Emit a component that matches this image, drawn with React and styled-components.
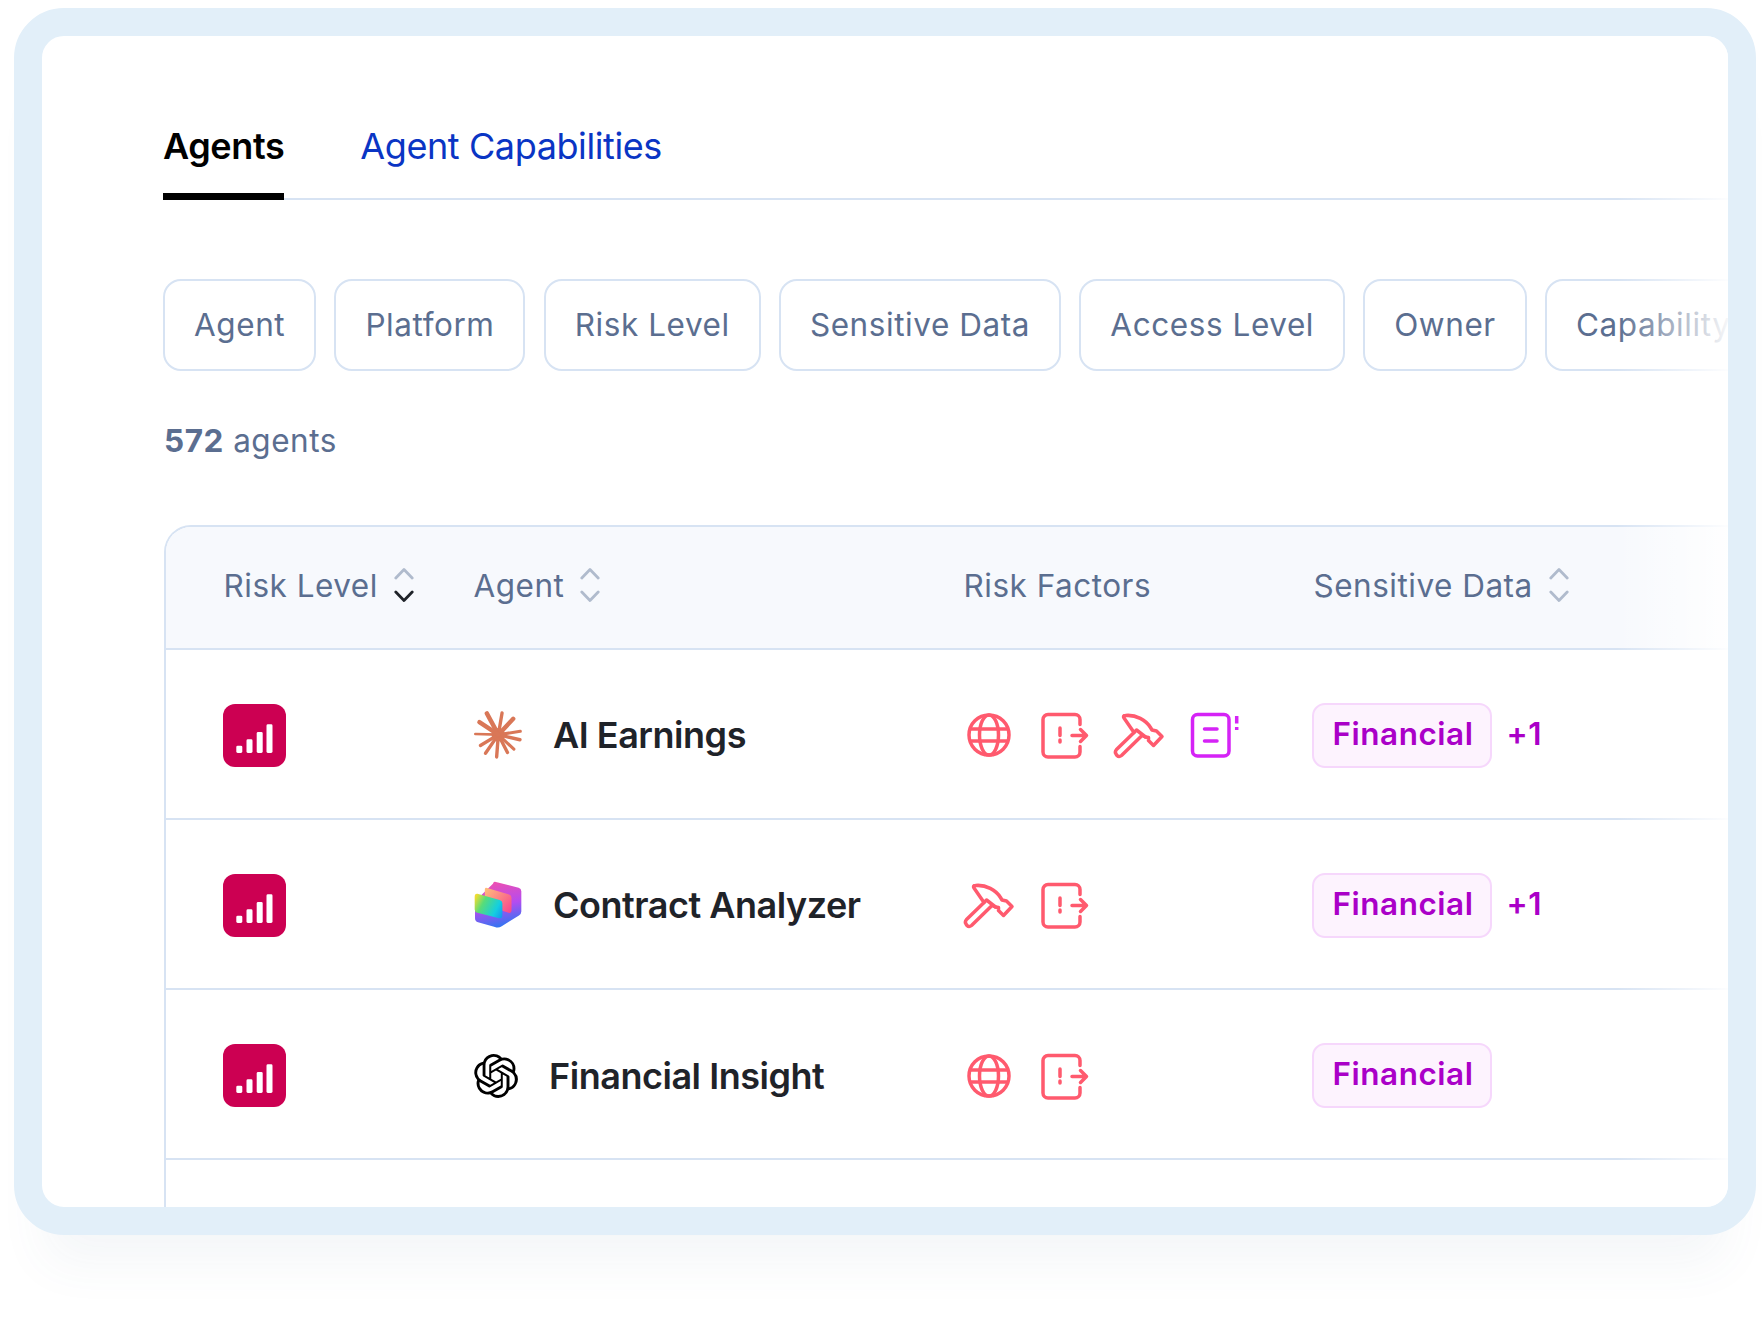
import React from "react";
import styled, { createGlobalStyle } from "styled-components";
import { SiOpenai } from "react-icons/si";

const GlobalStyle = createGlobalStyle`
  html, body { margin: 0; padding: 0; background: #ffffff; }
  body { font-family: Inter, "Liberation Sans", sans-serif; -webkit-font-smoothing: antialiased; }
`;

const Page = styled.div`
  width: 1764px;
  height: 1320px;
  box-sizing: border-box;
  padding: 8px 0 0 14px;
  overflow: hidden;
  background: #fff;
`;

const Frame = styled.div`
  width: 1742px;
  height: 1227px;
  box-sizing: border-box;
  border: 28px solid #e2eff9;
  border-radius: 50px;
  background: #fff;
  box-shadow: 0 58px 50px -30px rgba(70, 100, 140, 0.06);
`;

const Panel = styled.div`
  position: relative;
  height: 100%;
  box-sizing: border-box;
  padding: 83px 0 0 121px;
  display: flex;
  flex-direction: column;
  border-radius: 22px;
  overflow: hidden;
`;

const Fade = styled.div`
  position: absolute;
  top: 0;
  right: 0;
  bottom: 0;
  width: 112px;
  pointer-events: none;
  background: linear-gradient(to right, rgba(255, 255, 255, 0), rgba(255, 255, 255, 0.55) 60%, rgba(255, 255, 255, 0.95) 100%);
`;

const TabBar = styled.div`
  display: flex;
  gap: 76px;
  border-bottom: 2.5px solid #d7e3f3;
`;

const Tab = styled.div`
  height: 54px;
  line-height: 54px;
  padding-bottom: 20px;
  margin-bottom: -2.5px;
  font-size: 36px;
  letter-spacing: -0.4px;
  font-weight: ${(p) => (p.$active ? 600 : 400)};
  color: ${(p) => (p.$active ? "#000" : "#0a35c4")};
  border-bottom: 7px solid ${(p) => (p.$active ? "#000" : "transparent")};
`;

const FilterRow = styled.div`
  display: flex;
  gap: 18.2px;
  margin-top: 79px;
`;

const Filter = styled.div`
  flex-shrink: 0;
  height: 92px;
  box-sizing: border-box;
  display: flex;
  align-items: center;
  padding: 0 29px;
  border: 2.5px solid #d7e3f3;
  border-radius: 18px;
  font-size: 31.5px;
  letter-spacing: 0.57px;
  color: #5b6e90;
  white-space: nowrap;
`;

const Count = styled.div`
  margin-top: 46px;
  height: 47px;
  line-height: 47px;
  font-size: 31.5px;
  letter-spacing: 0.5px;
  margin-left: 1px;
  color: #5b6e90;
  b { font-weight: 700; }
`;

const Table = styled.div`
  flex: 1;
  margin: 61px -40px 0 0.5px;
  border-top: 2.5px solid #d7e3f3;
  border-left: 2.5px solid #d7e3f3;
  border-top-left-radius: 27px;
`;

const Row = styled.div`
  display: grid;
  grid-template-columns: 250px 490px 350px 1fr;
  align-items: center;
  box-sizing: border-box;
  padding-left: 58px;
  padding-top: ${(p) => (p.$head ? "0" : "3px")};
  padding-bottom: ${(p) => (p.$head ? "4px" : "0")};
  height: ${(p) => (p.$head ? "123px" : "170.25px")};
  border-bottom: 2.5px solid #d7e3f3;
  background: ${(p) => (p.$head ? "#f7f9fd" : "#fff")};
  border-top-left-radius: ${(p) => (p.$head ? "25px" : "0")};
`;

const HeadCell = styled.div`
  display: flex;
  align-items: center;
  gap: 16px;
  font-size: 31.5px;
  letter-spacing: 0.5px;
  color: #5b6e90;
  white-space: nowrap;
`;

const RiskTile = styled.div`
  width: 63px;
  height: 63px;
  margin-left: -0.5px;
  border-radius: 12px;
  background: #cc0052;
  display: flex;
  align-items: center;
  justify-content: center;
`;

const AgentCell = styled.div`
  display: flex;
  align-items: center;
  gap: 31.5px;
  font-size: 36px;
  font-weight: 600;
  letter-spacing: -0.47px;
  color: #1f2329;
  white-space: nowrap;
`;

const LogoBox = styled.div`
  width: ${(p) => p.$w}px;
  height: 48px;
  flex-shrink: 0;
  display: flex;
  align-items: center;
  justify-content: center;
  color: #000;
`;

const IconRow = styled.div`
  display: flex;
  gap: 21px;
  margin-left: -2px;
`;

const IconCell = styled.svg`
  width: 54px;
  height: 54px;
  display: block;
  fill: none;
  stroke: ${(p) => p.$color || "#ff5a6e"};
  stroke-width: 3.5;
  stroke-linecap: round;
  stroke-linejoin: round;
`;

const TagCell = styled.div`
  display: flex;
  align-items: center;
  gap: 15px;
  font-size: 31.5px;
  font-weight: 600;
  letter-spacing: 0.5px;
  color: #aa00c8;
  margin-left: -2px;
`;

const Badge = styled.div`
  width: 180px;
  height: 65px;
  box-sizing: border-box;
  display: flex;
  align-items: center;
  justify-content: center;
  padding: 0 0 4px 3px;
  border: 2.5px solid #f6d7fc;
  border-radius: 13px;
  background: #fdf3fe;
`;

const More = styled.span`
  padding-bottom: 4px;
`;

const SortIcon = ({ active }) => (
  <svg width="20" height="36" viewBox="0 0 20 36" fill="none" strokeWidth="2.8" strokeLinecap="round" strokeLinejoin="round">
    <path d="M1.8 11 L10 2.5 L18.2 11" stroke="#b0bbcd" />
    <path d="M1.8 25 L10 33.5 L18.2 25" stroke={active ? "#1f2329" : "#b0bbcd"} />
  </svg>
);

const Bars = () => (
  <svg width="63" height="63" viewBox="0 0 63 63" fill="#fff">
    <rect x="13.3" y="41.7" width="6" height="7.3" rx="1.4" />
    <rect x="23.5" y="35.3" width="6" height="13.7" rx="1.4" />
    <rect x="33.7" y="28" width="6" height="21" rx="1.4" />
    <rect x="43.5" y="20.3" width="6" height="28.7" rx="1.4" />
  </svg>
);

const Star = () => (
  <svg width="48" height="48" viewBox="0 0 142 142" fill="none" stroke="#d97757" strokeLinecap="round">
    <circle cx="72" cy="70" r="20" fill="#d97757" stroke="none" />
    <path strokeWidth="13" d="M72 70 L38 7" />
    <path strokeWidth="10" d="M72 70 L83 6" />
    <path strokeWidth="13" d="M72 70 L116 23" />
    <path strokeWidth="9" d="M72 70 L137 60" />
    <path strokeWidth="10" d="M72 70 L136 85" />
    <path strokeWidth="9" d="M72 70 L118 113" />
    <path strokeWidth="10" d="M72 70 L99 123" />
    <path strokeWidth="10" d="M72 70 L67 136" />
    <path strokeWidth="10" d="M72 70 L34 125" />
    <path strokeWidth="10" d="M72 70 L19 102" />
    <path strokeWidth="8" d="M72 70 L4 68" />
    <path strokeWidth="13" d="M72 70 L16 33" />
  </svg>
);

const Cubes = () => (
  <svg width="48" height="48" viewBox="0 0 142 142" fill="none">
    <defs>
      <linearGradient id="cubeBack" x1="70" y1="0" x2="100" y2="140" gradientUnits="userSpaceOnUse">
        <stop offset="0" stopColor="#ef4fb0" />
        <stop offset="0.5" stopColor="#b44cf0" />
        <stop offset="1" stopColor="#1f7bf2" />
      </linearGradient>
      <linearGradient id="cubeMid" x1="30" y1="20" x2="115" y2="90" gradientUnits="userSpaceOnUse">
        <stop offset="0" stopColor="#ffc27a" />
        <stop offset="1" stopColor="#f8418f" />
      </linearGradient>
      <linearGradient id="cubeFront" x1="0" y1="55" x2="84" y2="100" gradientUnits="userSpaceOnUse">
        <stop offset="0" stopColor="#f0dc30" />
        <stop offset="0.3" stopColor="#58dc78" />
        <stop offset="0.75" stopColor="#14cfe0" />
        <stop offset="1" stopColor="#149cf0" />
      </linearGradient>
    </defs>
    <path fill="url(#cubeBack)" d="M62 2 L132 20 Q140 23 140 30 V90 Q140 97 133 102 L82 134 Q72 140 62 136 L12 122 Q3 119 3 110 V60 L56 8 Q58 1 62 2 Z" />
    <path fill="url(#cubeMid)" d="M36 20 L104 40 Q111 43 111 50 V87 Q111 96 102 94 L32 70 V26 Q32 19 36 20 Z" />
    <path fill="url(#cubeFront)" d="M10 38 L76 56 Q84 59 84 66 V102 Q84 112 74 110 L10 94 Q2 92 2 84 V47 Q2 37 10 38 Z" />
  </svg>
);

const Globe = () => (
  <IconCell viewBox="0 0 54 54">
    <circle cx="27" cy="27" r="20" />
    <ellipse cx="27" cy="27" rx="9.5" ry="20" />
    <path d="M8.5 21 H45.5 M8.5 33 H45.5" />
  </IconCell>
);

const Export = () => (
  <IconCell viewBox="0 0 54 54">
    <path d="M43 16.5 V11.5 A5 5 0 0 0 38 6.5 H11 A5 5 0 0 0 6 11.5 V44 A5 5 0 0 0 11 49 H38 A5 5 0 0 0 43 44 V38.5" />
    <path d="M23 20 V27.5 M23 32 V34" />
    <path d="M35 27.5 H49.5 M43.5 21.5 L49.5 27.5 L43.5 33.5" />
  </IconCell>
);

const Hammer = () => (
  <IconCell viewBox="0 0 54 54">
    <path d="M12 10 Q10.5 7.5 13.5 7.5 C24 6.5 34 12 38.5 19.5 L40 22 L44.5 23 L50 28.5 L41.5 37.5 L36.5 32.5 L36.5 29.5 L33.5 29 L30 27.5 L9.5 47.5 Q7 49.5 5 47.5 L4 46 Q2.5 44 4.5 41.5 L22 24.5 Z" />
    <path d="M22 24.5 L24.5 22 L33.5 29" />
  </IconCell>
);

const Doc = () => (
  <IconCell viewBox="0 0 54 54" $color="#d523f6">
    <rect x="5.5" y="6.5" width="36.5" height="41.5" rx="5" />
    <path d="M17.5 21 H30 M17.5 33 H30" />
    <path d="M49.7 8 V15.5 M49.7 19 V22" strokeLinecap="butt" />
  </IconCell>
);

const Signal = { globe: Globe, exit: Export, hammer: Hammer, doc: Doc };

const agents = [
  { name: "AI Earnings", logo: <Star />, w: 48, icons: ["globe", "exit", "hammer", "doc"], more: true },
  { name: "Contract Analyzer", logo: <Cubes />, w: 48, icons: ["hammer", "exit"], more: true },
  { name: "Financial Insight", logo: <SiOpenai size={46} />, w: 44, icons: ["globe", "exit"], more: false },
];

const filters = ["Agent", "Platform", "Risk Level", "Sensitive Data", "Access Level", "Owner", "Capability"];

export default function App() {
  return (
    <Page>
      <GlobalStyle />
      <Frame>
        <Panel>
          <TabBar>
            <Tab $active>Agents</Tab>
            <Tab>Agent Capabilities</Tab>
          </TabBar>
          <FilterRow>
            {filters.map((f) => (
              <Filter key={f}>{f}</Filter>
            ))}
          </FilterRow>
          <Count>
            <b>572</b> agents
          </Count>
          <Table>
            <Row $head>
              <HeadCell>Risk Level <SortIcon active /></HeadCell>
              <HeadCell>Agent <SortIcon /></HeadCell>
              <HeadCell>Risk Factors</HeadCell>
              <HeadCell>Sensitive Data <SortIcon /></HeadCell>
            </Row>
            {agents.map((a) => (
              <Row key={a.name}>
                <RiskTile><Bars /></RiskTile>
                <AgentCell>
                  <LogoBox $w={a.w}>{a.logo}</LogoBox>
                  {a.name}
                </AgentCell>
                <IconRow>
                  {a.icons.map((k) => {
                    const I = Signal[k];
                    return <I key={k} />;
                  })}
                </IconRow>
                <TagCell>
                  <Badge>Financial</Badge>
                  {a.more && <More>+1</More>}
                </TagCell>
              </Row>
            ))}
          </Table>
          <Fade />
        </Panel>
      </Frame>
    </Page>
  );
}
